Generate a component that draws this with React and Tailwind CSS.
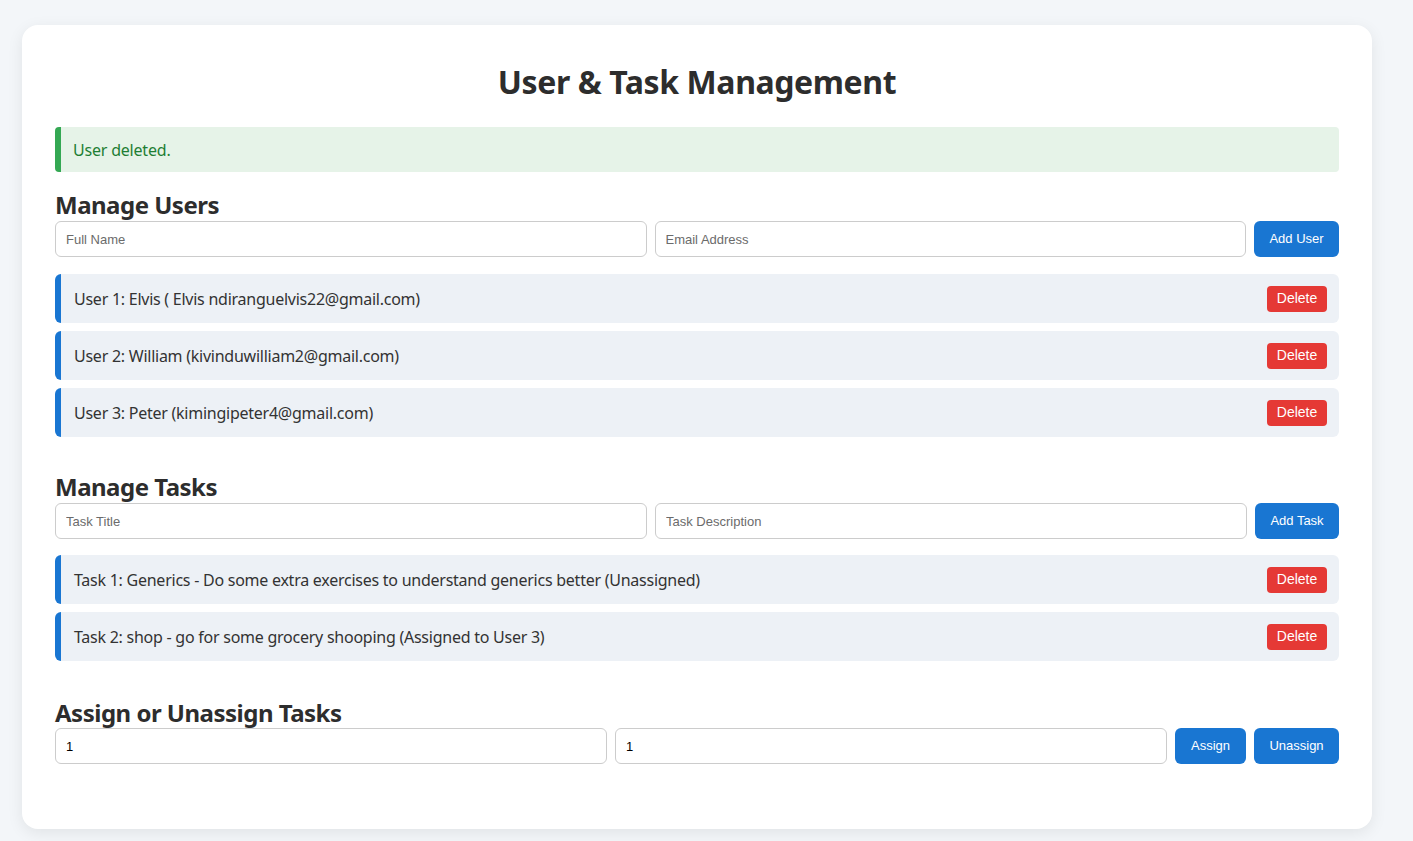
const users = [
  "User 1: Elvis ( Elvis ndiranguelvis22@gmail.com)",
  "User 2: William (kivinduwilliam2@gmail.com)",
  "User 3: Peter (kimingipeter4@gmail.com)",
];

const tasks = [
  "Task 1: Generics - Do some extra exercises to understand generics better (Unassigned)",
  "Task 2: shop - go for some grocery shooping (Assigned to User 3)",
];

const inputCls =
  "h-[36px] flex-1 min-w-0 rounded-[6px] border border-[#cccccc] bg-white px-[10px] text-[13px] text-black placeholder:text-[#6b6b6b] outline-none font-['Liberation_Sans',Arial,sans-serif]";
const btnCls =
  "h-[36px] rounded-[6px] bg-[#1976d2] text-white text-[13px] font-['Liberation_Sans',Arial,sans-serif]";

function ItemRow({ text }) {
  return (
    <div className="flex h-[49px] items-center justify-between rounded-[6px] border-l-[6px] border-[#1976d2] bg-[#edf1f6] pl-[13px] pr-[12px]">
      <span className="text-[16px] tracking-[-0.25px] text-[#333333]">{text}</span>
      <button className="h-[26px] w-[60px] rounded-[4px] bg-[#e53935] text-[14px] text-white font-['Liberation_Sans',Arial,sans-serif]">
        Delete
      </button>
    </div>
  );
}

function SectionTitle({ children }) {
  return (
    <h2 className="text-[24px] font-bold leading-[22px] tracking-[-0.5px] text-[#2d2d2d]">
      {children}
    </h2>
  );
}

export default function App() {
  return (
    <div className="min-h-[841px] bg-[#f3f6f9] pt-[25px] pl-[22px] font-['Noto_Sans',sans-serif]">
      <div className="w-[1350px] h-[804px] rounded-[16px] bg-white px-[33px] pt-[37px] shadow-[0_4px_16px_rgba(0,0,0,0.08)]">
        {/* Header */}
        <h1 className="text-center text-[32px] font-bold leading-[40px] tracking-[-0.4px] text-[#2d2d2d]">
          User &amp; Task Management
        </h1>

        <div className="mt-[25px] flex h-[45px] items-center rounded-[4px] border-l-[6px] border-[#34a853] bg-[#e6f3e8] pl-[12px] text-[16px] tracking-[-0.2px] text-[#1e7e34]">
          User deleted.
        </div>

        {/* Users */}
        <div className="mt-[22px]">
          <SectionTitle>Manage Users</SectionTitle>
          <div className="mt-[5px] flex gap-[8px]">
            <input className={inputCls} placeholder="Full Name" />
            <input className={inputCls} placeholder="Email Address" />
            <button className={`${btnCls} w-[85px]`}>Add User</button>
          </div>
          <div className="mt-[17px] flex flex-col gap-[8px]">
            {users.map((u) => (
              <ItemRow key={u} text={u} />
            ))}
          </div>
        </div>

        {/* Tasks */}
        <div className="mt-[39px]">
          <SectionTitle>Manage Tasks</SectionTitle>
          <div className="mt-[5px] flex gap-[8px]">
            <input className={inputCls} placeholder="Task Title" />
            <input className={inputCls} placeholder="Task Description" />
            <button className={`${btnCls} w-[84px]`}>Add Task</button>
          </div>
          <div className="mt-[16px] flex flex-col gap-[8px]">
            {tasks.map((t) => (
              <ItemRow key={t} text={t} />
            ))}
          </div>
        </div>

        {/* Assign */}
        <div className="mt-[41px]">
          <SectionTitle>Assign or Unassign Tasks</SectionTitle>
          <div className="mt-[4px] flex gap-[8px]">
            <input className={`${inputCls} h-[35px]`} defaultValue="1" />
            <input className={`${inputCls} h-[35px]`} defaultValue="1" />
            <button className={`${btnCls} h-[35px] w-[71px]`}>Assign</button>
            <button className={`${btnCls} h-[35px] w-[85px]`}>Unassign</button>
          </div>
        </div>
      </div>
    </div>
  );
}
